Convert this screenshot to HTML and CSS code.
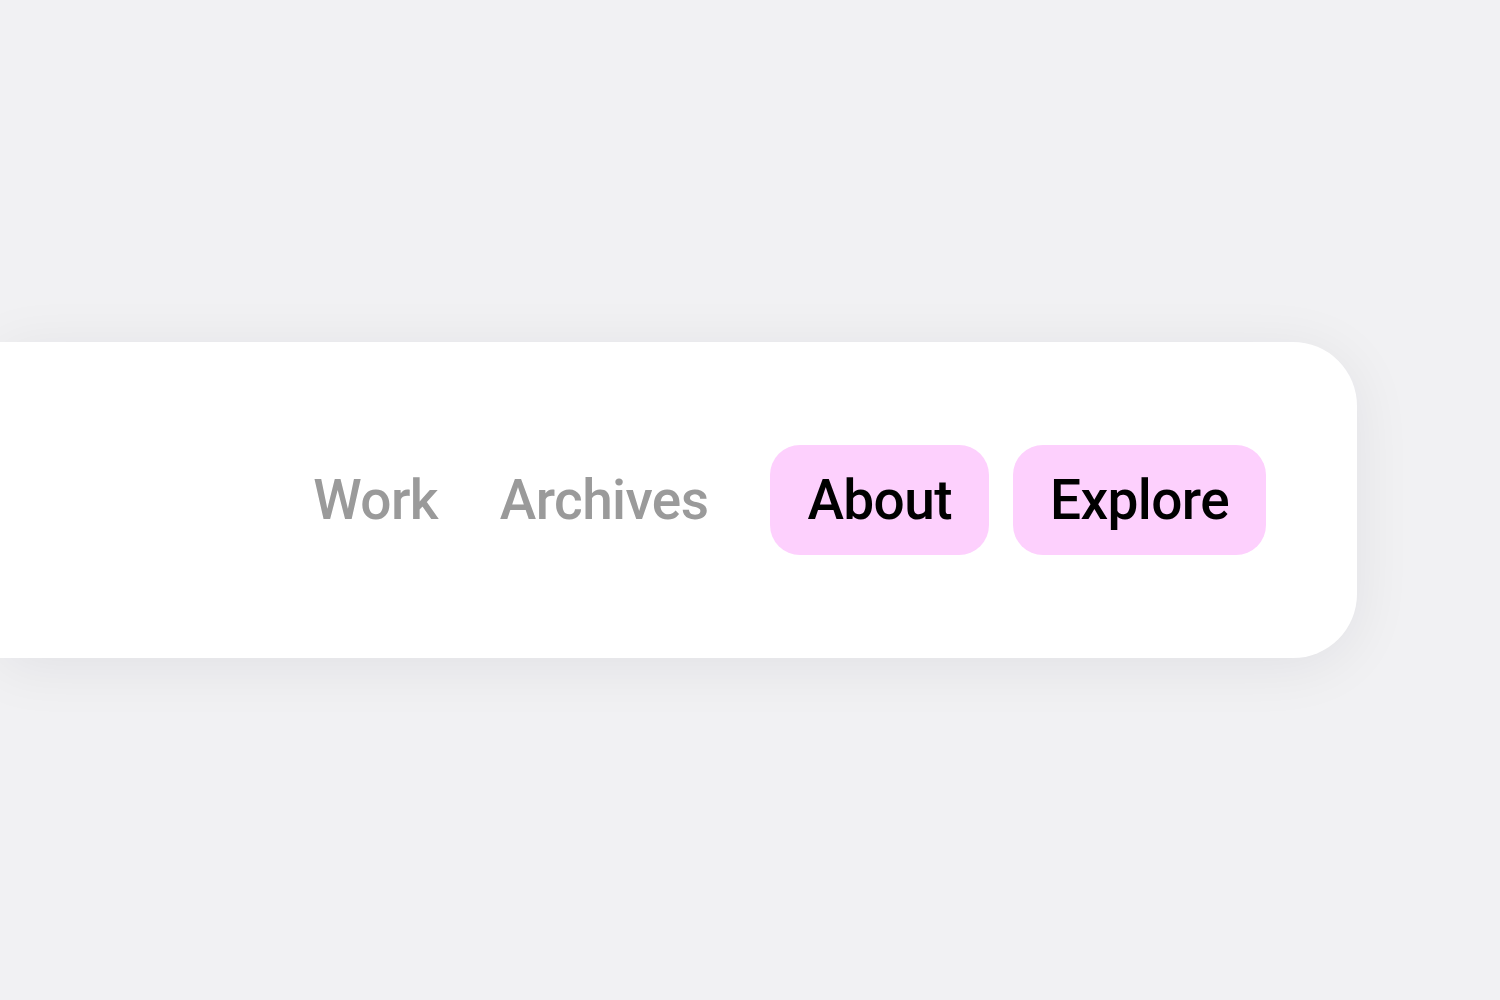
FILE: index.html
```html
<!DOCTYPE html>
<html lang="en">
<head>
<meta charset="utf-8">
<title>Nav</title>
<link rel="stylesheet" href="styles.css">
</head>
<body>
  <div class="stage">
    <header class="bar">
      <nav class="nav">
        <a class="link" href="#">Work</a>
        <a class="link" href="#">Archives</a>
        <a class="pill" href="#">About</a>
        <a class="pill" href="#">Explore</a>
      </nav>
    </header>
  </div>
</body>
</html>
```

FILE: styles.css
```css
html, body {
  margin: 0;
  padding: 0;
  background: #f1f1f3;
  width: 1500px;
  height: 1000px;
  overflow: hidden;
}

.stage {
  padding-top: 342px;
}

.bar {
  width: 1357px;
  height: 316px;
  background: #ffffff;
  border-radius: 0 64px 64px 0;
  box-shadow: 0 8px 60px rgba(20, 20, 40, 0.07);
  display: flex;
  align-items: center;
  justify-content: flex-end;
  padding-right: 91px;
  box-sizing: border-box;
}

.nav {
  display: flex;
  align-items: center;
  gap: 24px;
  font-family: Roboto, "Liberation Sans", Arial, sans-serif;
  font-weight: 500;
  font-size: 55px;
  letter-spacing: -0.6px;
}

.nav a {
  text-decoration: none;
  display: flex;
  align-items: center;
  height: 110px;
  line-height: 1;
}

.link {
  color: #9a9a9a;
  padding: 0 38px 0 0;
}

.pill {
  color: #000;
  background: #fdd0fd;
  border-radius: 30px;
  padding: 0 37px;
}
```
